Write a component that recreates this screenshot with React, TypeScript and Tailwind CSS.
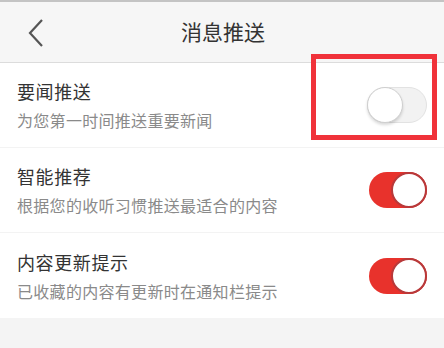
import React from 'react';

type Item = { title: string; desc: string; on: boolean };

const items: Item[] = [
  { title: '要闻推送', desc: '为您第一时间推送重要新闻', on: false },
  { title: '智能推荐', desc: '根据您的收听习惯推送最适合的内容', on: true },
  { title: '内容更新提示', desc: '已收藏的内容有更新时在通知栏提示', on: true },
];

function Toggle({ on }: { on: boolean }) {
  if (on) {
    return (
      <div className="w-[58px] h-[36px] rounded-full bg-[#e8322c] flex items-center justify-end">
        <div className="w-[36px] h-[36px] rounded-full bg-white border-2 border-[#b8393a]" />
      </div>
    );
  }
  return (
    <div className="w-[60px] h-[36px] rounded-full bg-[#f2f2f2] border border-[#e2e2e2] flex items-center">
      <div className="w-[36px] h-[36px] -ml-px rounded-full bg-white border border-[#cfcfcf] shadow-[0_2px_3px_rgba(0,0,0,0.15)]" />
    </div>
  );
}

export default function App() {
  return (
    <div
      className="relative w-[444px] h-[348px] bg-[#f4f4f4] overflow-hidden"
      style={{ fontFamily: '"Noto Sans CJK SC", "Noto Sans", sans-serif' }}
    >
      {/* header */}
      <div className="h-[63px] bg-[#f6f6f6] border-t-2 border-[#c4c4c4] border-b border-b-[#dcdcdc] flex items-center relative">
        <svg className="absolute left-[26px] top-[16px]" width="20" height="30" viewBox="0 0 20 30">
          <path d="M16 2 L4 15 L16 28" fill="none" stroke="#555" strokeWidth="2.2" />
        </svg>
        <div className="flex-1 text-center text-[21px] text-[#333] pl-[2px]">消息推送</div>
      </div>

      {/* list */}
      <div className="bg-white">
        {items.map((item, i) => (
          <div
            key={item.title}
            className={`h-[85px] flex items-center pl-[17px] pr-[17px] ${i < items.length - 1 ? 'border-b border-[#f3f3f3]' : ''}`}
          >
            <div className="flex-1 flex flex-col gap-[6px]">
              <div className="text-[18px] leading-[24px] text-[#333] tracking-[0.6px]">{item.title}</div>
              <div className="text-[16px] leading-[22px] text-[#8a8a8a] tracking-[0.3px]">{item.desc}</div>
            </div>
            <Toggle on={item.on} />
          </div>
        ))}
      </div>

      {/* highlight box */}
      <div className="absolute left-[311px] top-[54px] w-[126px] h-[86px] border-[5px] border-[#f0323a]" />
    </div>
  );
}
